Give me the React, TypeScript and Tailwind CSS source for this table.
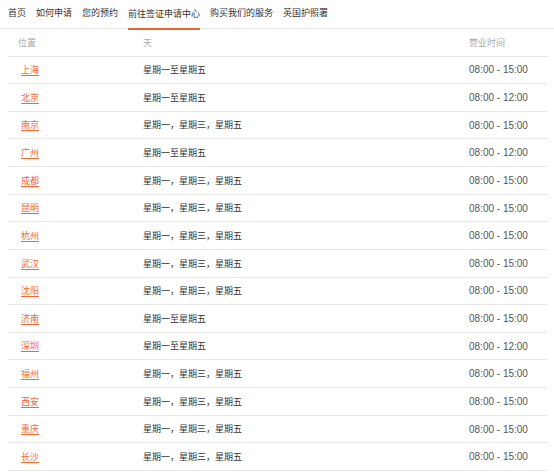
import React from "react";

const tabs = ["首页", "如何申请", "您的预约", "前往签证申请中心", "购买我们的服务", "英国护照署"];

const rows: [string, string, string][] = [
  ["上海", "星期一至星期五", "08:00 - 15:00"],
  ["北京", "星期一至星期五", "08:00 - 12:00"],
  ["南京", "星期一，星期三，星期五", "08:00 - 15:00"],
  ["广州", "星期一至星期五", "08:00 - 12:00"],
  ["成都", "星期一，星期三，星期五", "08:00 - 15:00"],
  ["昆明", "星期一，星期三，星期五", "08:00 - 15:00"],
  ["杭州", "星期一，星期三，星期五", "08:00 - 15:00"],
  ["武汉", "星期一，星期三，星期五", "08:00 - 15:00"],
  ["沈阳", "星期一，星期三，星期五", "08:00 - 15:00"],
  ["济南", "星期一至星期五", "08:00 - 15:00"],
  ["深圳", "星期一至星期五", "08:00 - 12:00"],
  ["福州", "星期一，星期三，星期五", "08:00 - 15:00"],
  ["西安", "星期一，星期三，星期五", "08:00 - 15:00"],
  ["重庆", "星期一，星期三，星期五", "08:00 - 15:00"],
  ["长沙", "星期一，星期三，星期五", "08:00 - 15:00"],
];

export default function App() {
  return (
    <div className="w-[554px] h-[475px] overflow-hidden bg-white text-[9px] text-[#333]" style={{ fontFamily: '"Noto Sans CJK SC", "Noto Sans", sans-serif' }}>
      <nav className="h-[29px] border-b border-[#e6e6e6] flex items-stretch gap-[10px] pl-[8px]">
        {tabs.map((t, i) => (
          <a key={t} href="#" className={i === 3 ? "flex items-center border-b-2 border-[#e4632f] -mb-[2px] pt-[0px] text-[#333]" : "flex items-center pb-[2px] text-[#333]"}>
            {t}
          </a>
        ))}
      </nav>

      <div className="mx-[8px] w-[540px]">
        <div className="grid grid-cols-[125px_336px_1fr] h-[27.6px] items-center border-b border-[#e6e6e6] text-[#aaa]">
          <div className="pl-[10px]">位置</div>
          <div className="pl-[10px]">天</div>
          <div>营业时间</div>
        </div>
        {rows.map(([city, days, time]) => (
          <div key={city} className="grid grid-cols-[125px_336px_1fr] h-[27.64px] items-center border-b border-[#e8e8e8]">
            <div className="pl-[13px]">
              <a href="#" className="text-[#ef6a35] underline underline-offset-2">{city}</a>
            </div>
            <div className="pl-[10px] text-[#333]">{days}</div>
            <div className="text-[10px] text-[#555]" style={{ fontFamily: '"Liberation Sans", sans-serif' }}>{time}</div>
          </div>
        ))}
      </div>
    </div>
  );
}
